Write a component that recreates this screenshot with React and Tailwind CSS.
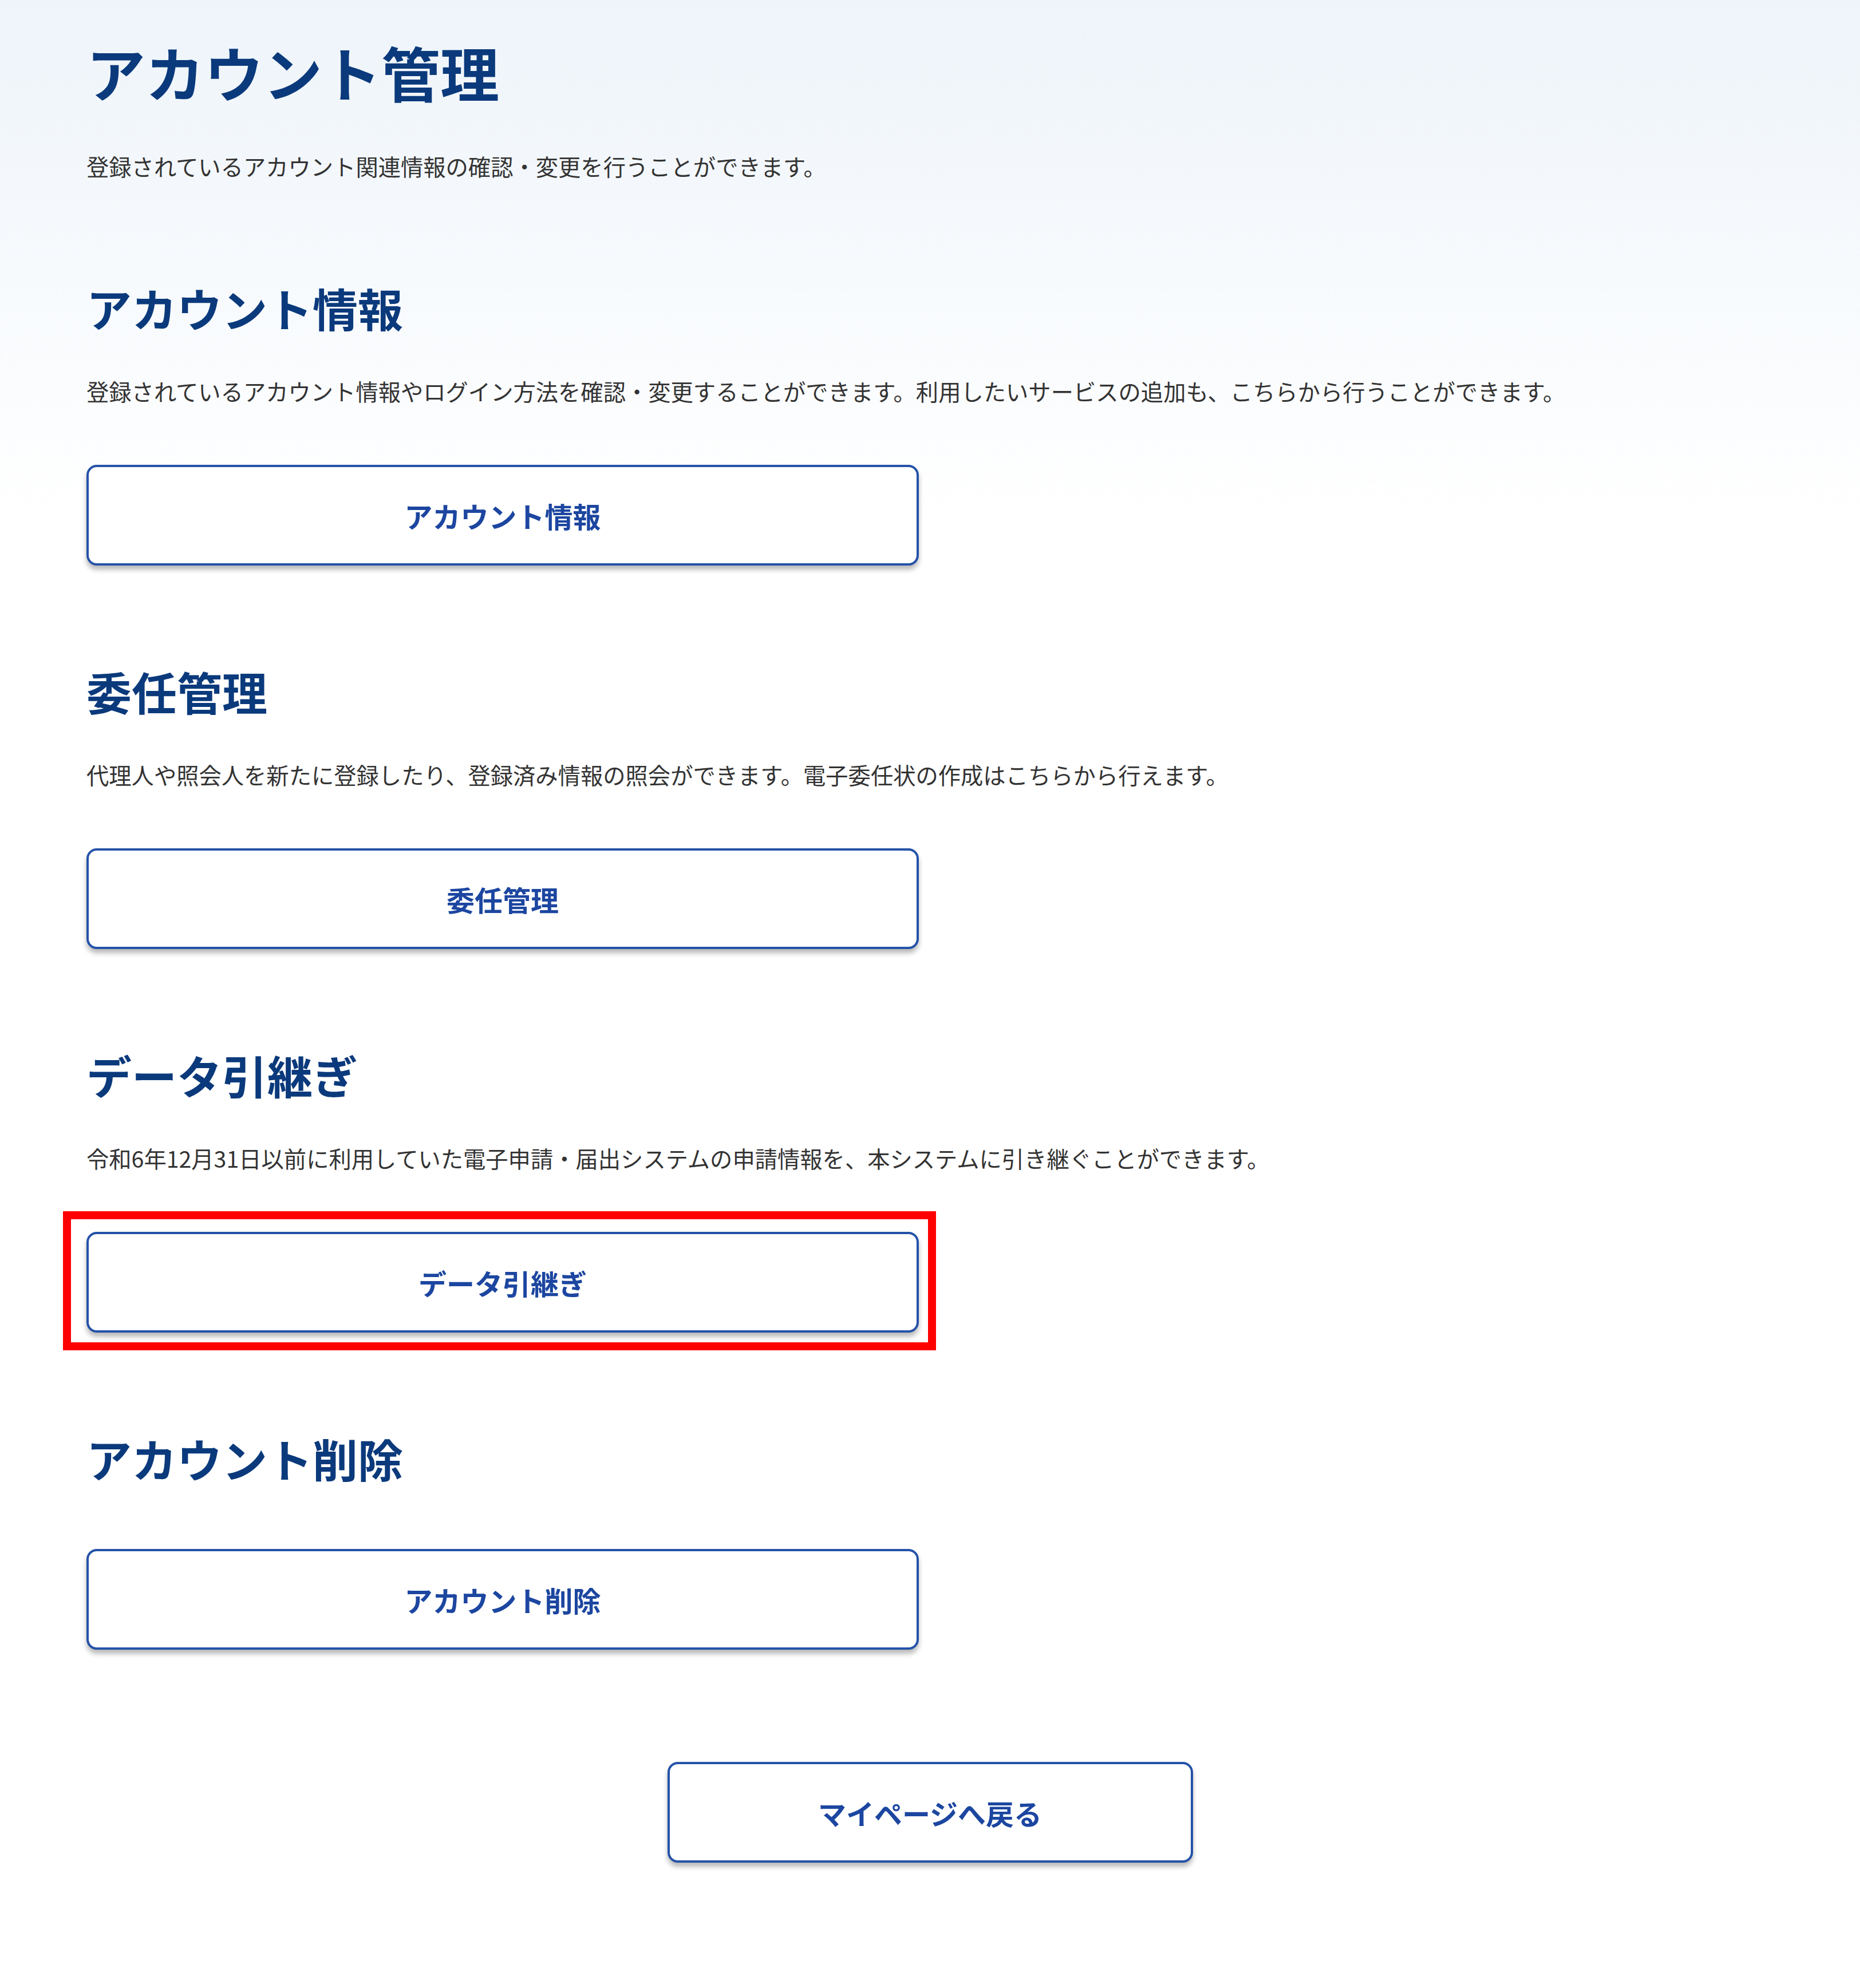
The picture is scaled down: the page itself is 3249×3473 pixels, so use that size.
const SECTIONS = [
  {
    title: 'アカウント情報',
    desc: '登録されているアカウント情報やログイン方法を確認・変更することができます。利用したいサービスの追加も、こちらから行うことができます。',
  },
  {
    title: '委任管理',
    desc: '代理人や照会人を新たに登録したり、登録済み情報の照会ができます。電子委任状の作成はこちらから行えます。',
  },
  {
    title: 'データ引継ぎ',
    desc: '令和6年12月31日以前に利用していた電子申請・届出システムの申請情報を、本システムに引き継ぐことができます。',
    marked: true,
  },
  { title: 'アカウント削除' },
];

const font = { fontFamily: '"Noto Sans CJK JP", "Noto Sans", sans-serif' };

function LinkButton({ children, className = '' }) {
  return (
    <button
      type="button"
      className={`flex h-[176px] items-center justify-center rounded-[18px] border-[4px] border-[#2452a8] bg-white text-[49px] font-bold leading-none text-[#1c46a0] shadow-[0_7px_8px_rgba(0,0,0,0.28)] ${className}`}
    >
      {children}
    </button>
  );
}

export default function App() {
  return (
    <div
      style={font}
      className="min-h-[3473px] w-full bg-[linear-gradient(to_bottom,#eef4fa_0px,#f7fafd_500px,#ffffff_900px)] pl-[151px] pt-[51px]"
    >
      <h1 className="text-[103px] font-bold leading-[150px] text-[#0b3a7c]">アカウント管理</h1>
      <p className="mt-[59px] text-[39.3px] leading-[60px] text-[#333333]">
        登録されているアカウント関連情報の確認・変更を行うことができます。
      </p>

      <div className="mt-[168px] flex flex-col gap-[170px]">
        {SECTIONS.map((s) => (
          <section key={s.title}>
            <h2 className="text-[79px] font-bold leading-[100px] text-[#0b3a7c]">{s.title}</h2>
            {s.desc && (
              <p className="mt-[65px] whitespace-nowrap text-[39.3px] leading-[60px] text-[#333333]">
                {s.desc}
              </p>
            )}
            <div className={`relative w-[1454px] ${s.desc ? 'mt-[99px]' : 'mt-[108px]'}`}>
              <LinkButton className="w-full">{s.title}</LinkButton>
              {s.marked && (
                <div className="pointer-events-none absolute -bottom-[31px] -left-[41px] -right-[30px] -top-[36px] border-[14px] border-[#ff0000]" />
              )}
            </div>
          </section>
        ))}
      </div>

      <div className="mt-[196px] flex justify-center pr-[151px]">
        <LinkButton className="w-[918px]">マイページへ戻る</LinkButton>
      </div>
    </div>
  );
}
